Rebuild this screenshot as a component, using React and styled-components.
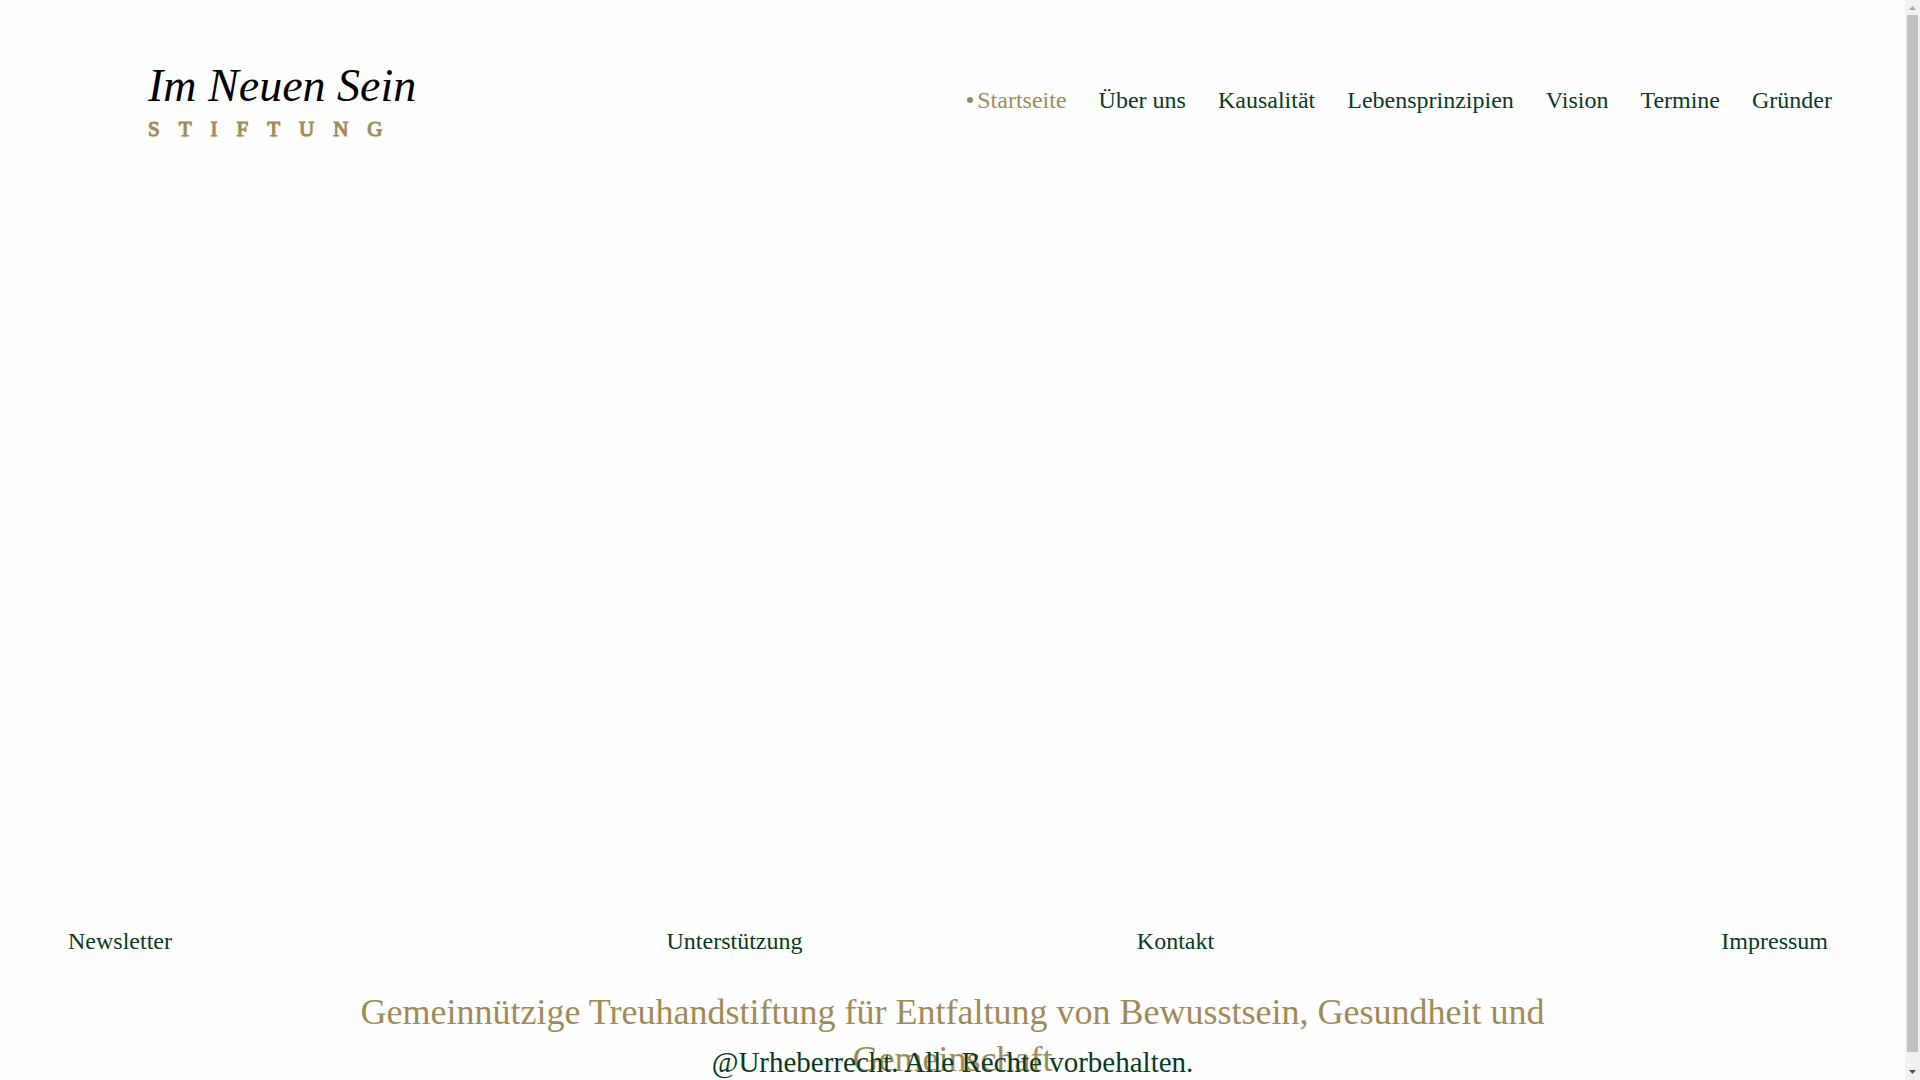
import React from 'react';
import styled, { createGlobalStyle } from 'styled-components';

const GlobalStyle = createGlobalStyle`
    *, *::before, *::after {
        box-sizing: border-box;
    }

    body {
        margin: 0;
        background-color: #fefefe;
        color: #073b22;
        font-family: 'Liberation Serif', 'Times New Roman', serif;
    }
`;

const Page = styled.div`
    display: flex;
    align-items: stretch;
    height: 100vh;
    overflow: hidden;
`;

const Content = styled.div`
    flex: 1;
    min-width: 0;
    position: relative;
    display: flex;
    flex-direction: column;
`;

const Header = styled.header`
    display: flex;
    justify-content: space-between;
    align-items: center;
    padding: 57px 73px 0 148px;
`;

const Logo = styled.a`
    display: flex;
    flex-direction: column;
    text-decoration: none;
`;

const LogoName = styled.span`
    color: #000;
    font-size: 46px;
    font-style: italic;
    line-height: 58px;
`;

const LogoType = styled.span`
    color: #a08b58;
    font-size: 21px;
    line-height: 28px;
    letter-spacing: 19px;
    -webkit-text-stroke: 1px #a08b58;
    text-shadow: 0 1px 2px rgba(160, 139, 88, 0.4);
`;

const NavList = styled.ul`
    display: flex;
    flex-wrap: wrap;
    gap: 8px 32px;
    margin: 0;
    padding: 0;
    list-style: none;
`;

const NavLink = styled.a`
    display: flex;
    align-items: center;
    color: ${({ $active }) => ($active ? '#a08b58' : '#073b22')};
    font-size: 24px;
    line-height: 28px;
    text-decoration: none;

    &::before {
        content: '';
        display: ${({ $active }) => ($active ? 'block' : 'none')};
        width: 6px;
        height: 6px;
        margin-right: 4px;
        border-radius: 50%;
        background-color: #a08b58;
    }
`;

const Main = styled.main`
    flex: 1;
`;

const Footer = styled.footer`
    height: 153px;
`;

const FooterNav = styled.nav`
    display: grid;
    grid-template-columns: 446fr 441fr 441fr 432fr;
    padding: 0 77px 0 68px;
    text-align: center;

    a:first-child {
        justify-self: start;
    }

    a:last-child {
        justify-self: end;
    }
`;

const FooterLink = styled.a`
    color: #073b22;
    font-size: 24px;
    line-height: 28px;
    text-decoration: none;
`;

const Claim = styled.h2`
    width: 66%;
    margin: 34px auto 0;
    color: #a08b58;
    font-size: 36px;
    font-weight: 400;
    line-height: 47px;
    text-align: center;
`;

const Copyright = styled.p`
    position: absolute;
    right: 0;
    bottom: 0;
    left: 0;
    margin: 0;
    font-size: 29px;
    line-height: 36px;
    text-align: center;
`;

const ScrollTrack = styled.div`
    display: flex;
    flex-direction: column;
    align-items: center;
    width: 15px;
    background-color: #f1f1f1;
`;

const ScrollThumb = styled.div`
    align-self: stretch;
    flex: 0 0 96%;
    margin: 0 2px;
    background-color: #c1c1c1;
`;

const ScrollArrow = styled.svg`
    flex: none;
    display: block;
    width: 15px;
    height: 15px;
    margin-top: ${({ $end }) => ($end ? 'auto' : '0')};
    fill: ${({ $end }) => ($end ? '#505050' : '#a3a3a3')};
`;

const navItems = ['Startseite', 'Über uns', 'Kausalität', 'Lebensprinzipien', 'Vision', 'Termine', 'Gründer'];
const footerItems = ['Newsletter', 'Unterstützung', 'Kontakt', 'Impressum'];

const App = () => (
    <>
        <GlobalStyle />
        <Page>
            <Content>
                <Header>
                    <Logo href="#">
                        <LogoName>Im Neuen Sein</LogoName>
                        <LogoType>STIFTUNG</LogoType>
                    </Logo>
                    <nav>
                        <NavList>
                            {navItems.map((item, index) => (
                                <li key={item}>
                                    <NavLink href="#" $active={index === 0}>
                                        {item}
                                    </NavLink>
                                </li>
                            ))}
                        </NavList>
                    </nav>
                </Header>
                <Main />
                <Footer>
                    <FooterNav>
                        {footerItems.map((item) => (
                            <FooterLink key={item} href="#">
                                {item}
                            </FooterLink>
                        ))}
                    </FooterNav>
                    <Claim>
                        Gemeinnützige Treuhandstiftung für Entfaltung von Bewusstsein, Gesundheit und Gemeinschaft
                    </Claim>
                    <Copyright>@Urheberrecht. Alle Rechte vorbehalten.</Copyright>
                </Footer>
            </Content>
            <ScrollTrack aria-hidden="true">
                <ScrollArrow viewBox="0 0 15 15">
                    <path d="M4 10 7.5 6 11 10z" />
                </ScrollArrow>
                <ScrollThumb />
                <ScrollArrow $end viewBox="0 0 15 15">
                    <path d="M4 5 7.5 9 11 5z" />
                </ScrollArrow>
            </ScrollTrack>
        </Page>
    </>
);

export default App;
